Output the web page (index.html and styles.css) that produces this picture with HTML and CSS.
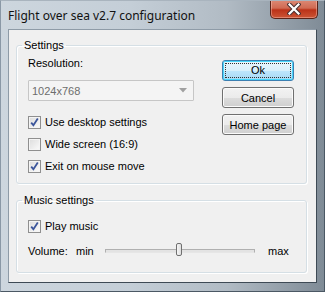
FILE: index.html
```html
<!DOCTYPE html>
<html lang="en">
<head>
  <meta charset="UTF-8" />
  <title>Flight over sea v2.7 configuration</title>
  <link rel="stylesheet" href="styles.css">
</head>
<body>
  <div class="window">
    <div class="titlebar">
      <span class="title">Flight over sea v2.7 configuration</span>
      <div class="close">
        <svg width="14" height="12" viewBox="0 0 14 12">
          <path d="M2.5 1.5 L11.5 10.5 M11.5 1.5 L2.5 10.5" stroke="#4a3030" stroke-width="4.2" stroke-linecap="square"/>
          <path d="M2.5 1.5 L11.5 10.5 M11.5 1.5 L2.5 10.5" stroke="#fff" stroke-width="2.2" stroke-linecap="square"/>
        </svg>
      </div>
    </div>

    <div class="client">
      <fieldset class="group">
        <legend>Settings</legend>
        <div class="settings-body">
          <div class="left">
            <div class="label">Resolution:</div>
            <div class="combo">
              <span>1024x768</span>
              <svg width="8" height="5" viewBox="0 0 8 5"><path d="M0 0 L8 0 L4 4.5 Z" fill="#a0a0a0"/></svg>
            </div>
            <label class="check-row">
              <span class="box checked"><svg width="11" height="11" viewBox="0 0 11 11"><path d="M2.2 5.6 L4.4 8.2 L8.8 1.6" fill="none" stroke="#3b559b" stroke-width="1.8"/></svg></span>
              Use desktop settings
            </label>
            <label class="check-row">
              <span class="box"></span>
              Wide screen (16:9)
            </label>
            <label class="check-row">
              <span class="box checked"><svg width="11" height="11" viewBox="0 0 11 11"><path d="M2.2 5.6 L4.4 8.2 L8.8 1.6" fill="none" stroke="#3b559b" stroke-width="1.8"/></svg></span>
              Exit on mouse move
            </label>
          </div>
          <div class="buttons">
            <div class="btn default"><span>Ok</span></div>
            <div class="btn">Cancel</div>
            <div class="btn">Home page</div>
          </div>
        </div>
      </fieldset>

      <fieldset class="group music">
        <legend>Music settings</legend>
        <div class="music-body">
          <label class="check-row">
            <span class="box checked"><svg width="11" height="11" viewBox="0 0 11 11"><path d="M2.2 5.6 L4.4 8.2 L8.8 1.6" fill="none" stroke="#3b559b" stroke-width="1.8"/></svg></span>
            Play music
          </label>
          <div class="volume">
            <span class="vol-label">Volume:</span>
            <span class="vol-min">min</span>
            <div class="track">
              <div class="thumb"></div>
            </div>
            <span>max</span>
          </div>
        </div>
      </fieldset>
    </div>
  </div>
</body>
</html>
```

FILE: styles.css
```css
body {
  margin: 0;
  padding: 0;
  font-family: 'Liberation Sans', Arial, sans-serif;
  font-size: 11px;
  color: #000;
}

.window {
  width: 325px;
  height: 292px;
  box-sizing: border-box;
  padding: 0 7px 8px 7px;
  background: linear-gradient(to right, #cdd6de 0%, #c4ced7 40%, #b1bbc4 70%, #7f8b96 100%);
  border: 1px solid #4b5864;
  border-top-color: #a9b4be;
  border-left-color: #8a98a6;
  overflow: hidden;
}

.titlebar {
  height: 28px;
  display: flex;
  justify-content: space-between;
  align-items: flex-start;
}

.title {
  font-family: 'Noto Sans', 'Open Sans', sans-serif;
  font-size: 12px;
  margin-top: 6px;
  color: #111;
}

.close {
  width: 46px;
  height: 18px;
  margin-right: -1px;
  margin-top: -1px;
  border: 1px solid #5a2318;
  border-top: none;
  border-radius: 0 0 5px 5px;
  background: linear-gradient(to bottom, #dc8a76 0%, #d06a52 45%, #bb3218 55%, #cc5535 100%);
  box-shadow: inset 0 0 0 1px rgba(255,210,200,0.4);
  display: flex;
  align-items: center;
  justify-content: center;
}

.client {
  height: 254px;
  box-sizing: border-box;
  background: #f0f0f0;
  border: 1px solid;
  border-color: #8e9ba7 #3e4a55 #3e4a55 #8e9ba7;
  padding-top: 8px;
}

.group {
  margin: 0 9px 0 7px;
  padding: 0;
  border: 1px solid #d5dfe5;
  border-radius: 3px;
  box-shadow: inset 1px 1px 0 #fff, 1px 1px 0 #fff;
}

.group legend {
  padding: 0 2px;
  margin-left: 5px;
  line-height: 14px;
}

.settings-body {
  display: flex;
  justify-content: space-between;
  padding: 0 12px 6px 11px;
}

.left {
  width: 166px;
}

.label {
  margin-top: 4px;
  line-height: 14px;
  color: #000;
}

.combo {
  margin-top: 10px;
  height: 21px;
  box-sizing: border-box;
  border: 1px solid #c6c6c6;
  border-radius: 1px;
  background: #f4f4f4;
  display: flex;
  align-items: center;
  justify-content: space-between;
  padding: 0 6px 0 3px;
  color: #6d6d6d;
  margin-bottom: 10px;
}

.check-row {
  display: flex;
  align-items: center;
  height: 22px;
  gap: 4px;
}

.box {
  width: 13px;
  height: 13px;
  box-sizing: border-box;
  border: 1px solid #8f8f8f;
  background: linear-gradient(135deg, #dcdcdc, #fbfbfb);
  box-shadow: inset 0 0 0 1px #f4f4f4;
  display: flex;
  align-items: center;
  justify-content: center;
  flex-shrink: 0;
}

.buttons {
  margin-top: 8px;
  display: flex;
  flex-direction: column;
  gap: 6px;
}

.btn {
  width: 72px;
  height: 21px;
  box-sizing: border-box;
  border: 1px solid #707070;
  border-radius: 3px;
  background: linear-gradient(to bottom, #f2f2f2 0%, #ebebeb 50%, #dddddd 51%, #cfcfcf 100%);
  box-shadow: inset 0 0 0 1px #fbfbfb;
  display: flex;
  align-items: center;
  justify-content: center;
}

.btn.default {
  border-color: #3c7fb1;
  background: linear-gradient(to bottom, #eaf6fd 0%, #d9f0fc 50%, #bee6fd 51%, #a7d9f5 100%);
  box-shadow: inset 0 0 0 1px #48d6fb;
}

.btn.default span {
  width: 64px;
  height: 13px;
  line-height: 13px;
  text-align: center;
  outline: 1px dotted #333;
}

.music {
  margin-top: 9px;
}

.music-body {
  padding: 8px 11px 10px 11px;
}

.volume {
  display: flex;
  align-items: center;
  height: 22px;
  margin-top: 3px;
}

.vol-label {
  width: 48px;
}

.vol-min {
  width: 29px;
}

.track {
  width: 148px;
  height: 2px;
  margin-right: 13px;
  border: 1px solid #b0b0b0;
  border-bottom-color: #e6e6e6;
  background: #e3e3e3;
  position: relative;
}

.thumb {
  position: absolute;
  left: 70px;
  top: -7px;
  width: 6px;
  height: 13px;
  box-sizing: border-box;
  border: 1px solid #707070;
  border-radius: 2px;
  background: linear-gradient(to right, #f6f6f6, #dedede);
}
```
